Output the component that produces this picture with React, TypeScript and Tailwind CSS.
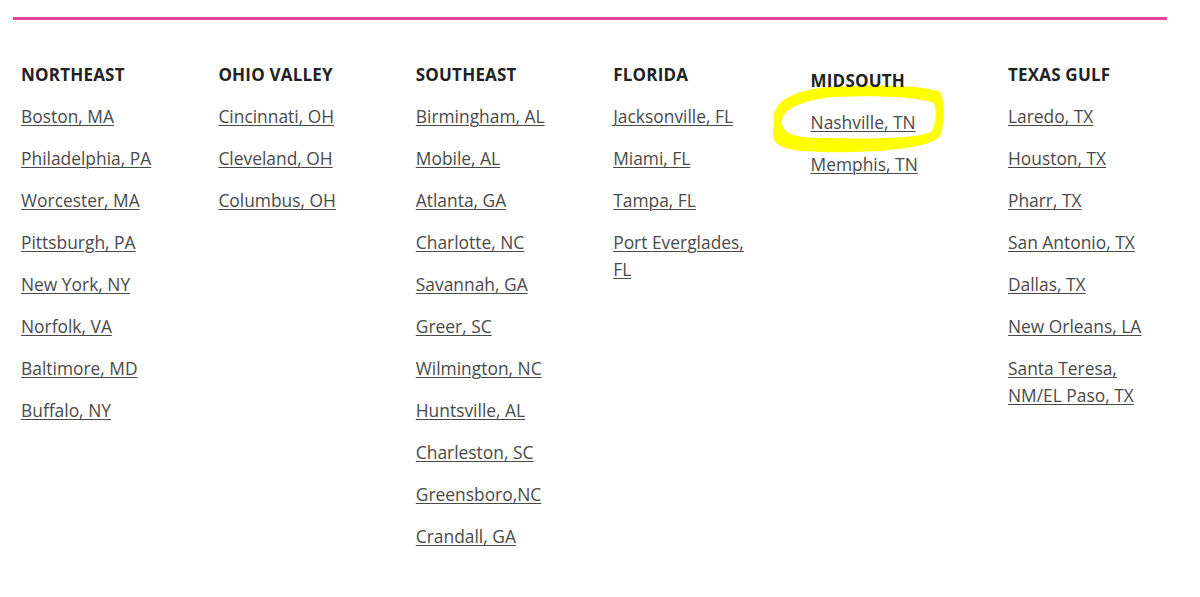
import React from "react";

const columns: { title: string; items: string[]; shift?: boolean }[] = [
  {
    title: "NORTHEAST",
    items: [
      "Boston, MA",
      "Philadelphia, PA",
      "Worcester, MA",
      "Pittsburgh, PA",
      "New York, NY",
      "Norfolk, VA",
      "Baltimore, MD",
      "Buffalo, NY",
    ],
  },
  {
    title: "OHIO VALLEY",
    items: ["Cincinnati, OH", "Cleveland, OH", "Columbus, OH"],
  },
  {
    title: "SOUTHEAST",
    items: [
      "Birmingham, AL",
      "Mobile, AL",
      "Atlanta, GA",
      "Charlotte, NC",
      "Savannah, GA",
      "Greer, SC",
      "Wilmington, NC",
      "Huntsville, AL",
      "Charleston, SC",
      "Greensboro,NC",
      "Crandall, GA",
    ],
  },
  {
    title: "FLORIDA",
    items: ["Jacksonville, FL", "Miami, FL", "Tampa, FL", "Port Everglades, FL"],
  },
  {
    title: "MIDSOUTH",
    items: ["Nashville, TN", "Memphis, TN"],
    shift: true,
  },
  {
    title: "TEXAS GULF",
    items: [
      "Laredo, TX",
      "Houston, TX",
      "Pharr, TX",
      "San Antonio, TX",
      "Dallas, TX",
      "New Orleans, LA",
      "Santa Teresa, NM/EL Paso, TX",
    ],
  },
];

export default function App() {
  return (
    <div
      className="relative w-[1200px] h-[597px] bg-white overflow-hidden"
      style={{ fontFamily: '"Open Sans", "Noto Sans", sans-serif' }}
    >
      <div className="pt-[17px] pl-[13px]">
        <div className="h-[3px] w-[1154px] bg-[#e8449a]" />
      </div>
      <svg
        className="absolute left-[760px] top-[70px] pointer-events-none"
        width="200"
        height="100"
        viewBox="760 70 200 100"
      >
        <path
          fillRule="evenodd"
          fill="#ffff00"
          d="M 774 116 C 775 100, 798 89, 830 87 C 872 84, 925 85, 940 92 C 945 98, 945 126, 940 136 C 930 150, 866 153, 822 152 C 792 151, 773 149, 773 134 Z M 782 121 C 783 108, 806 99, 836 97 C 872 95, 922 97, 934 103 C 937 110, 936 126, 931 132 C 916 139, 864 139, 824 138 C 798 138, 781 135, 782 121 Z"
        />
      </svg>
      <div className="relative grid grid-cols-[repeat(6,197.4px)] pl-[21px] pt-[43px]">
        {columns.map((col) => (
          <div key={col.title} className={col.shift ? "mt-[6px]" : ""}>
            <h3 className="text-[17px] leading-[24px] font-bold text-[#222222] tracking-[0.2px]">
              {col.title}
            </h3>
            <ul className="mt-[16px] w-[150px]">
              {col.items.map((item) => (
                <li key={item} className="mb-[15px]">
                  <a
                    href="#"
                    className="text-[17.4px] leading-[27px] text-[#4a4a4a] underline underline-offset-[2px] decoration-[1px]"
                  >
                    {item}
                  </a>
                </li>
              ))}
            </ul>
          </div>
        ))}
      </div>
    </div>
  );
}
